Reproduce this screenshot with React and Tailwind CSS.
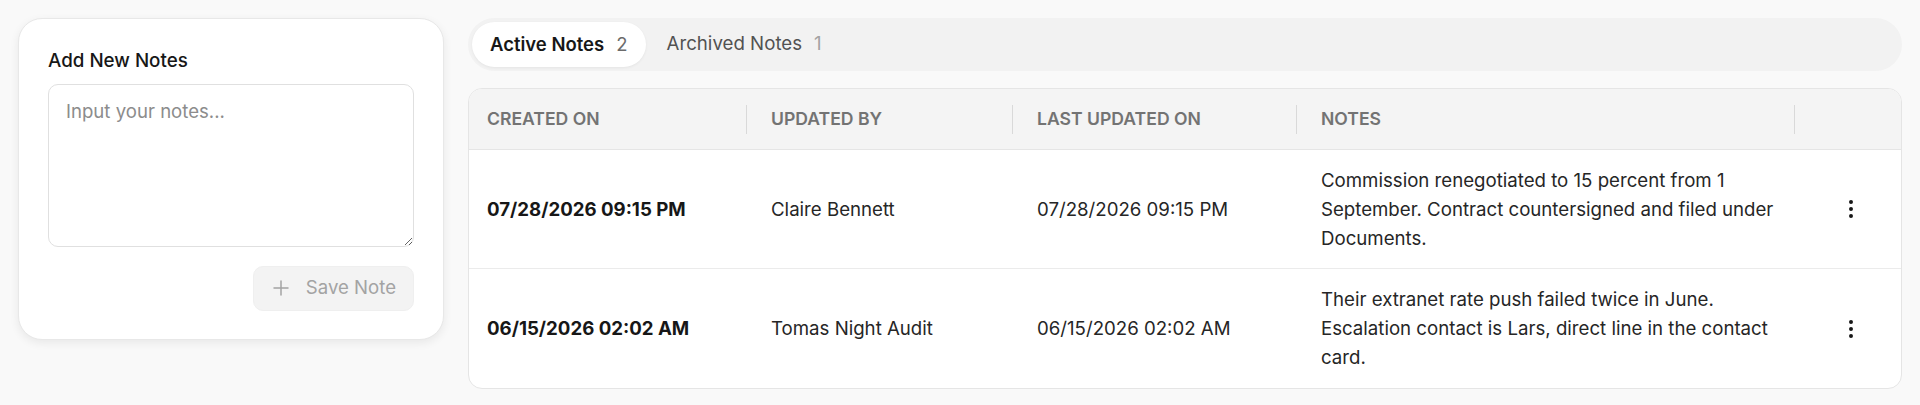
import { Plus, EllipsisVertical } from "lucide-react";

const notes = [
  {
    id: 1,
    createdOn: "07/28/2026 09:15 PM",
    updatedBy: "Claire Bennett",
    lastUpdated: "07/28/2026 09:15 PM",
    text: "Commission renegotiated to 15 percent from 1 September. Contract countersigned and filed under Documents.",
  },
  {
    id: 2,
    createdOn: "06/15/2026 02:02 AM",
    updatedBy: "Tomas Night Audit",
    lastUpdated: "06/15/2026 02:02 AM",
    text: "Their extranet rate push failed twice in June. Escalation contact is Lars, direct line in the contact card.",
  },
];

const columns = ["Created On", "Updated By", "Last Updated On", "Notes"];

function HeaderCell({ label }) {
  return (
    <div className="flex items-center justify-between pl-[18px] pr-[6px]">
      <span className="uppercase font-semibold text-[17.6px] text-[#737373]">{label}</span>
      <div className="w-px h-[29px] bg-[#d9d9d9]" />
    </div>
  );
}

export default function App() {
  return (
    <div
      className="flex gap-[24px] p-[18px] min-h-[405px] bg-[#f9f9f9] text-[#262626]"
      style={{ fontFamily: "Inter, 'Noto Sans', sans-serif" }}
    >
      {/* new note form */}
      <div className="w-[426px] shrink-0 self-start bg-white border border-[#e8e8e8] rounded-[24px] shadow-[0_3px_10px_rgba(0,0,0,0.07)] px-[29px] pt-[28px] pb-[28px]">
        <h3 className="text-[18.8px] leading-[28.8px] font-medium text-[#171717] mb-[8px]">Add New Notes</h3>
        <textarea
          placeholder="Input your notes..."
          className="block w-full h-[163px] rounded-[10px] border border-[#e0e0e0] px-[17px] pt-[12px] text-[18.6px] leading-[28.8px] outline-none placeholder:text-[#8c8c8c]"
        />
        <div className="flex justify-end mt-[19px]">
          <button className="flex items-center gap-[13px] h-[45px] pl-[15px] pr-[17px] rounded-[10px] bg-[#f3f3f3] border border-[#efefef] text-[#a3a3a3] text-[18.6px]">
            <Plus size={24} strokeWidth={1.5} />
            <span>Save Note</span>
          </button>
        </div>
      </div>

      {/* notes list */}
      <div className="flex-1 flex flex-col gap-[17px]">
        <div className="flex items-center gap-[3px] p-[4px] rounded-full bg-[#f2f2f2]">
          <button className="flex items-center gap-[12px] h-[45px] px-[18px] rounded-full bg-white shadow-[0_1px_3px_rgba(0,0,0,0.06)] text-[18.5px]">
            <span className="font-semibold text-[#171717]">Active Notes</span>
            <span className="text-[#6b6b6b]">2</span>
          </button>
          <button className="flex items-center gap-[12px] h-[45px] px-[18px] rounded-full text-[18.7px]">
            <span className="text-[#525252]">Archived Notes</span>
            <span className="text-[#a3a3a3]">1</span>
          </button>
        </div>

        <div className="bg-white border border-[#e5e5e5] rounded-[14px] overflow-hidden">
          <div className="grid grid-cols-[284px_266px_284px_498px_1fr] h-[61px] bg-[#f4f4f4] border-b border-[#e5e5e5]">
            {columns.map((c) => (
              <HeaderCell key={c} label={c} />
            ))}
            <div />
          </div>
          {notes.map((n, i) => (
            <div
              key={n.id}
              className={`grid grid-cols-[284px_266px_284px_498px_1fr] items-center py-[16px] text-[18.65px] leading-[28.8px] ${
                i < notes.length - 1 ? "border-b border-[#ebebeb]" : ""
              }`}
            >
              <div className="pl-[18px] font-bold text-[#171717]">{n.createdOn}</div>
              <div className="pl-[18px]">{n.updatedBy}</div>
              <div className="pl-[18px]">{n.lastUpdated}</div>
              <div className="px-[18px]">{n.text}</div>
              <div className="flex justify-center">
                <button className="text-[#171717]">
                  <EllipsisVertical size={24} strokeWidth={2} />
                </button>
              </div>
            </div>
          ))}
        </div>
      </div>
    </div>
  );
}
